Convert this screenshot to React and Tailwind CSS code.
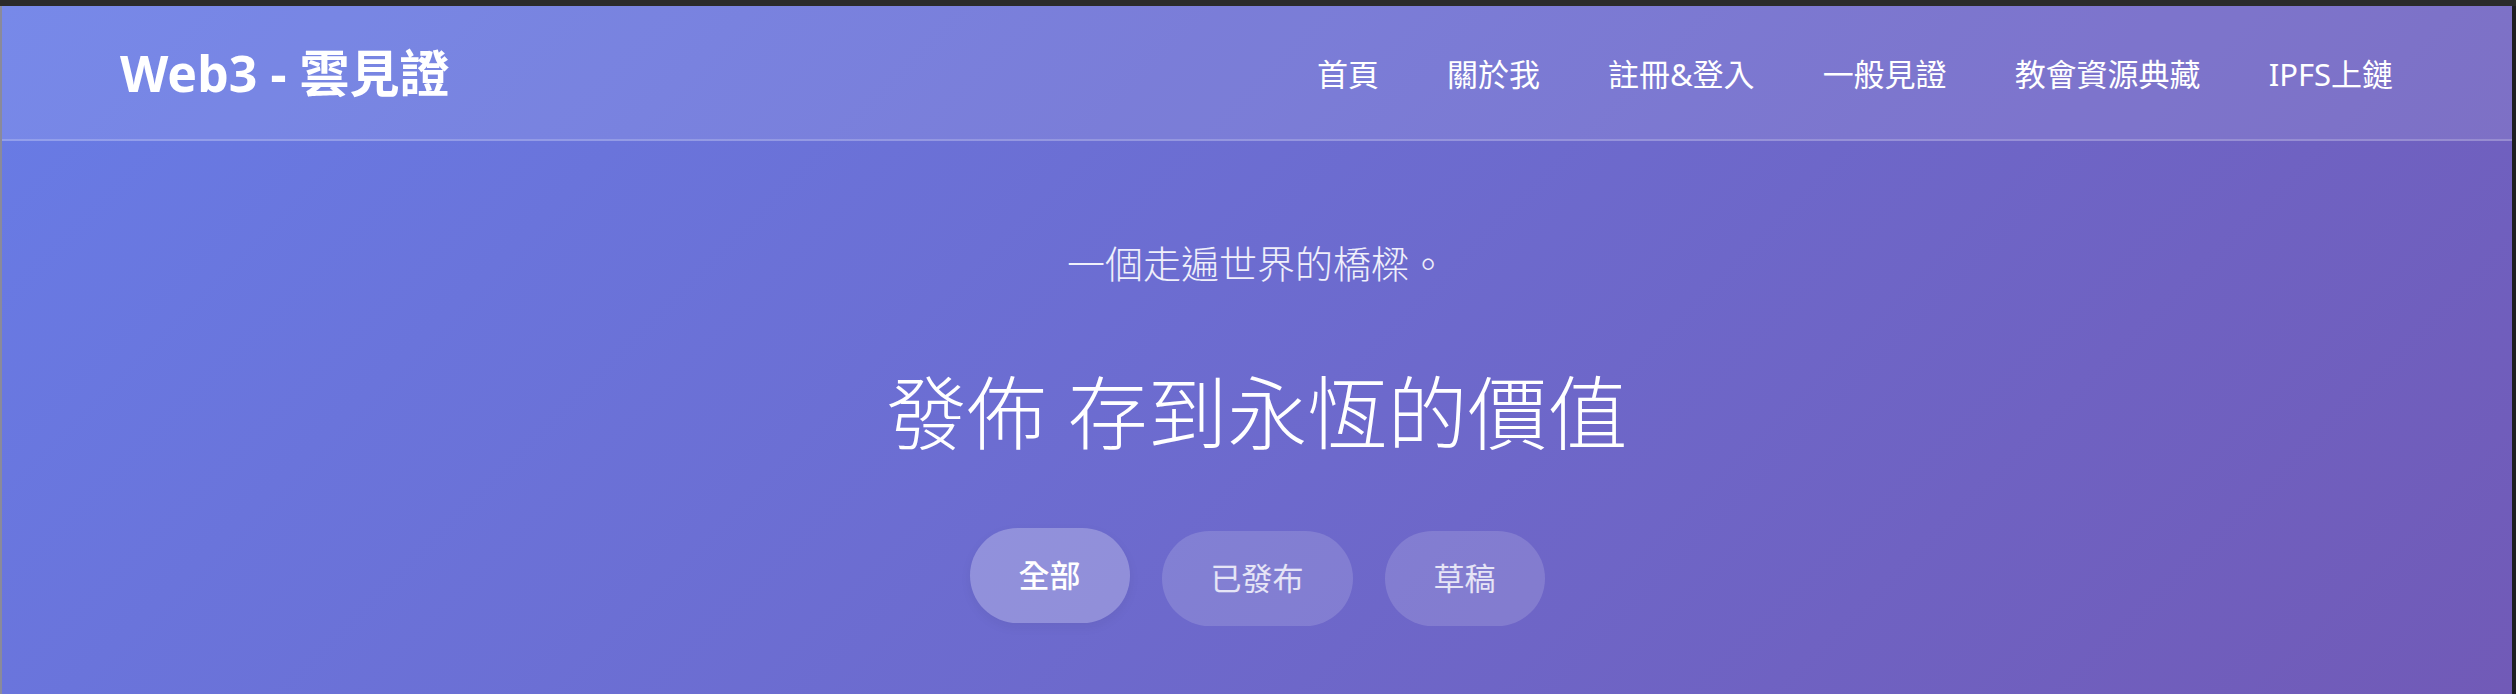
import React from "react";

const navItems = ["首頁", "關於我", "註冊&登入", "一般見證", "教會資源典藏", "IPFS上鏈"];
const filters = [
  { label: "全部", active: true },
  { label: "已發布", active: false },
  { label: "草稿", active: false },
];

export default function App() {
  return (
    <div className="flex h-screen flex-col overflow-hidden bg-[#2b2b2b] font-['Noto_Sans','Noto_Sans_CJK_TC',sans-serif]">
      {/* window chrome strip */}
      <div className="h-[6px] shrink-0 bg-[#2b2b2b]" />

      <div className="flex min-h-0 flex-1">
        <div className="w-[2px] shrink-0 bg-[#8a8a9a]" />
        <main className="flex min-w-0 flex-1 flex-col bg-[linear-gradient(135deg,#687ce6,#715ab7)] text-white">
          <header className="flex h-[135px] shrink-0 items-center justify-between border-b-2 border-white/20 bg-white/10 pl-[118px] pr-[119px]">
            <h1 className="text-[50px] font-bold leading-none">Web3 - 雲見證</h1>
            <nav className="flex items-center gap-[68px] pt-1">
              {navItems.map((item) => (
                <a key={item} href="#" className="text-[31px] font-normal leading-none">
                  {item}
                </a>
              ))}
            </nav>
          </header>

          <section className="flex flex-col items-center pt-[95px]">
            <p className="text-[38px] font-light leading-[54px] text-white/90">一個走遍世界的橋樑。</p>
            <h2 className="mt-[74px] text-[80px] font-light leading-[96px]">發佈 存到永恆的價值</h2>

            <div className="mt-[71px] flex items-start gap-[32px]">
              {filters.map((f) =>
                f.active ? (
                  <button
                    key={f.label}
                    className="h-[95px] -translate-y-[3px] rounded-full bg-white/25 px-[49px] text-[31px] font-medium text-white shadow-[0_4px_12px_rgba(0,0,0,0.05)]"
                  >
                    {f.label}
                  </button>
                ) : (
                  <button
                    key={f.label}
                    className="h-[95px] rounded-full bg-white/15 px-[49px] text-[31px] text-white/80"
                  >
                    {f.label}
                  </button>
                )
              )}
            </div>
          </section>
        </main>
        <div className="w-[4px] shrink-0 bg-[#1e1e22]" />
      </div>
    </div>
  );
}
